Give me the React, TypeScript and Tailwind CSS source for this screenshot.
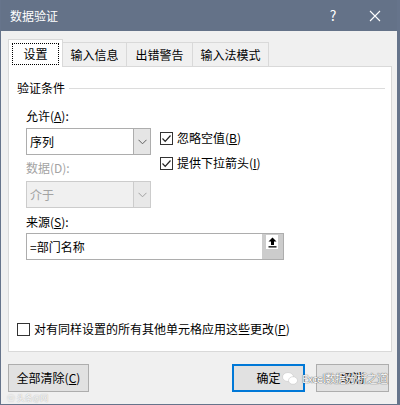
import React from "react";

const font = { fontFamily: '"Noto Sans CJK SC", "Noto Sans", sans-serif' };

function Chevron({ color = "#606060" }: { color?: string }) {
  return (
    <svg width="9" height="6" viewBox="0 0 9 6">
      <path d="M0.5 0.8 L4.5 4.8 L8.5 0.8" fill="none" stroke={color} strokeWidth="1" />
    </svg>
  );
}

function Check({ checked }: { checked: boolean }) {
  return (
    <span className="w-[13px] h-[13px] border border-[#333] bg-white flex items-center justify-center shrink-0">
      {checked && (
        <svg width="11" height="11" viewBox="0 0 11 11">
          <path d="M1.5 5.5 L4.2 8.3 L9.5 2.5" fill="none" stroke="#222" strokeWidth="1.2" />
        </svg>
      )}
    </span>
  );
}

function Select({ value, disabled }: { value: string; disabled?: boolean }) {
  return (
    <div
      className={`w-[125px] h-[27px] flex border ${
        disabled ? "border-[#cccccc] bg-[#f0f0f0]" : "border-[#adadad] bg-white"
      }`}
    >
      <div className={`flex-1 flex items-center pl-[3px] ${disabled ? "text-[#a3a3a3]" : "text-black"}`}>
        {value}
      </div>
      <div
        className={`w-[17px] flex items-center justify-center border-l ${
          disabled ? "border-[#cccccc] bg-[#e8e8e8]" : "border-[#adadad] bg-[#e5e5e5]"
        }`}
      >
        <Chevron color={disabled ? "#a0a0a0" : "#606060"} />
      </div>
    </div>
  );
}

export default function App() {
  return (
    <div
      className="w-[400px] h-[405px] bg-[#f0f0f0] border-r-[3px] border-b border-l border-[#66748b] flex flex-col text-[12px] text-black relative overflow-hidden"
      style={font}
    >
      {/* title bar */}
      <div className="h-[31px] bg-[#647288] flex items-center text-white shrink-0">
        <span className="pl-[9px] text-[12px] flex-1">数据验证</span>
        <span className="w-[20px] text-center text-[14px] mr-[26px]">?</span>
        <svg width="12" height="12" viewBox="0 0 12 12" className="mr-[16px]">
          <path d="M1 1 L11 11 M11 1 L1 11" stroke="white" strokeWidth="1.1" />
        </svg>
      </div>

      <div className="flex flex-col pl-[7px] pr-[6px]">
        {/* tabs */}
        <div className="flex items-end h-[36px] relative z-10 -mb-px">
          <div className="w-[55px] h-[28px] bg-white border border-b-0 border-[#d9d9d9] flex items-center justify-center">
            <span className="border border-dotted border-black px-[10px] h-[22px] flex items-center">设置</span>
          </div>
          <div className="w-[64px] h-[25px] bg-[#f0f0f0] border border-l-0 border-[#d9d9d9] flex items-center justify-center">
            输入信息
          </div>
          <div className="w-[66px] h-[25px] bg-[#f0f0f0] border border-l-0 border-[#d9d9d9] flex items-center justify-center">
            出错警告
          </div>
          <div className="w-[76px] h-[25px] bg-[#f0f0f0] border border-l-0 border-[#d9d9d9] flex items-center justify-center">
            输入法模式
          </div>
        </div>

        {/* panel */}
        <div className="w-[384px] h-[286px] bg-white border border-[#d9d9d9] flex flex-col pl-[8px] pt-[12px]">
          <div className="flex items-center h-[18px]">
            <span>验证条件</span>
            <div className="h-px bg-[#dcdcdc] ml-[4px] w-[316px]" />
          </div>

          <div className="pl-[9px] mt-[10px] flex">
            <div className="flex flex-col">
              <div className="h-[18px] leading-[18px]">
                允许(<span className="underline">A</span>):
              </div>
              <div className="mt-[3px]">
                <Select value="序列" />
              </div>
              <div className="h-[18px] leading-[18px] mt-[4px] text-[#a3a3a3]">数据(D):</div>
              <div className="mt-[4px]">
                <Select value="介于" disabled />
              </div>
            </div>
            <div className="flex flex-col ml-[9px] pt-[24px] gap-[11px]">
              <div className="flex items-center gap-[4px] h-[14px]">
                <Check checked />
                <span>
                  忽略空值(<span className="underline">B</span>)
                </span>
              </div>
              <div className="flex items-center gap-[4px] h-[14px]">
                <Check checked />
                <span>
                  提供下拉箭头(<span className="underline">I</span>)
                </span>
              </div>
            </div>
          </div>

          <div className="pl-[9px] mt-[5px]">
            <div className="h-[18px] leading-[18px]">
              来源(<span className="underline">S</span>):
            </div>
            <div className="mt-[2px] w-[258px] h-[27px] border border-[#adadad] flex">
              <div className="flex-1 flex items-center pl-[3px]">=部门名称</div>
              <div className="w-[21px] bg-[#cccccc] flex items-start pl-[4px] pt-[1px]">
                <div className="w-[12px] h-[14px] bg-white flex items-center justify-center">
                  <svg width="9" height="11" viewBox="0 0 9 11">
                    <path d="M4.5 0.5 L0.5 4.5 H3 V8 H6 V4.5 H8.5 Z" fill="#000" />
                    <rect x="0.5" y="9.2" width="8" height="1.3" fill="#000" />
                  </svg>
                </div>
              </div>
            </div>
          </div>

          <div className="mt-auto mb-[13px] flex items-center gap-[4px]">
            <Check checked={false} />
            <span>
              对有同样设置的所有其他单元格应用这些更改(<span className="underline">P</span>)
            </span>
          </div>
        </div>

        {/* buttons */}
        <div className="flex items-center mt-[12px] h-[28px]">
          <div className="w-[81px] h-[28px] bg-[#e1e1e1] border border-[#adadad] flex items-center justify-center">
            全部清除(<span className="underline">C</span>)
          </div>
          <div className="flex-1" />
          <div className="w-[73px] h-[28px] bg-[#e1e1e1] border-2 border-[#0078d7] flex items-center justify-center">
            确定
          </div>
          <div className="w-[73px] h-[28px] bg-[#e1e1e1] border border-[#adadad] flex items-center justify-center ml-[11px] mr-[2px]">
            取消
          </div>
        </div>
      </div>

      {/* watermark */}
      <div className="absolute left-[281px] top-[372px] flex items-center gap-[4px] whitespace-nowrap">
        <svg width="16" height="13" viewBox="0 0 16 13">
          <ellipse cx="6" cy="5" rx="5.5" ry="4.5" fill="white" stroke="#c8c8c8" strokeWidth="0.6" />
          <ellipse cx="11" cy="8.5" rx="4.5" ry="3.8" fill="white" stroke="#c8c8c8" strokeWidth="0.6" />
        </svg>
        <span
          className="text-white text-[11px] leading-[13px] tracking-[-0.6px]"
          style={{ textShadow: "0 0 1px #555, 0 0 1px #555" }}
        >
          Excel数据分析之道
        </span>
      </div>
      <div
        className="absolute left-[6px] top-[393px] text-[8px] leading-[9px] text-white whitespace-nowrap"
        style={{ textShadow: "0 0 1px #888" }}
      >
        ⓦ 头条@网
      </div>
    </div>
  );
}
